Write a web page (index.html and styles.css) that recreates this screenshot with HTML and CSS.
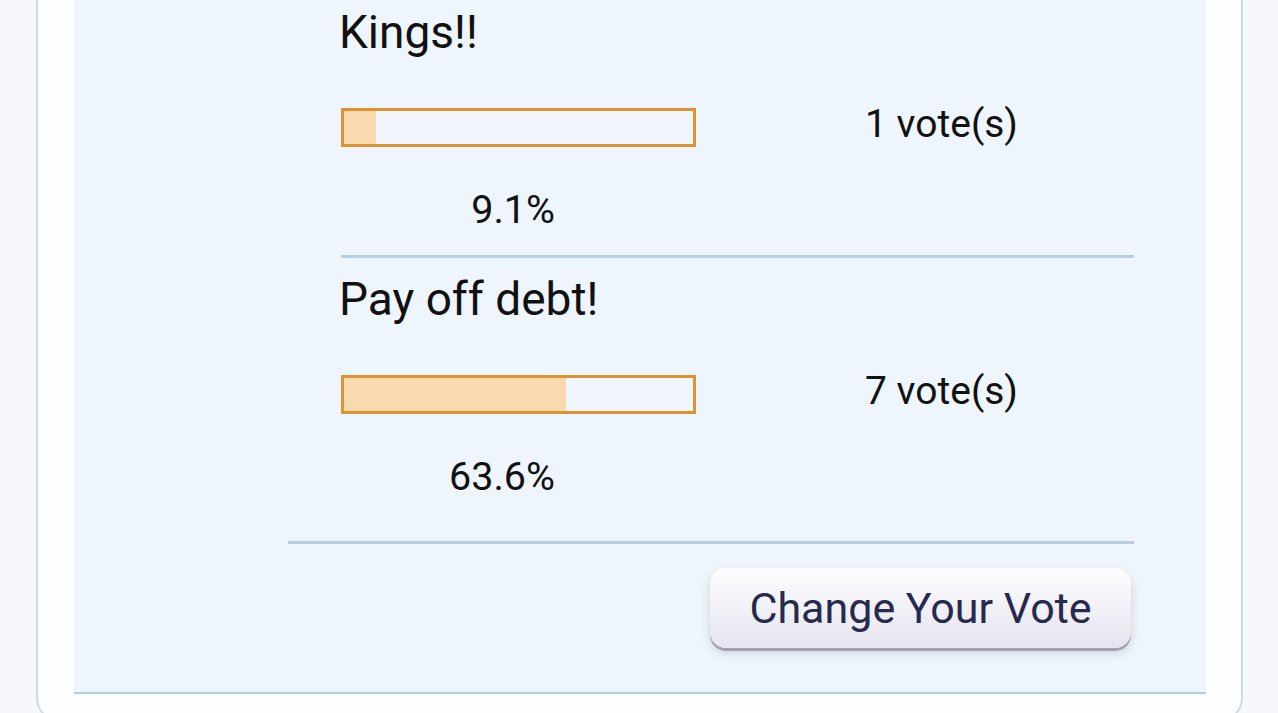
FILE: index.html
```html
<!DOCTYPE html>
<html lang="en">
<head>
<meta charset="UTF-8">
<meta name="viewport" content="width=device-width, initial-scale=1.0">
<title>Poll Results</title>
<link rel="stylesheet" href="styles.css">
</head>
<body>

<div class="card">
    <div class="panel">
        <div class="results">
            <div class="option">
                <div class="option-title">Kings!!</div>
                <div class="bar-line">
                    <div class="bar"><div class="bar-fill" style="width:9.1%"></div></div>
                    <span class="votes">1 vote(s)</span>
                </div>
                <div class="percent">9.1%</div>
            </div>
            <div class="option">
                <div class="option-title">Pay off debt!</div>
                <div class="bar-line">
                    <div class="bar"><div class="bar-fill" style="width:63.6%"></div></div>
                    <span class="votes">7 vote(s)</span>
                </div>
                <div class="percent">63.6%</div>
            </div>
        </div>
        <div class="footer">
            <button class="change-btn" type="button">Change Your Vote</button>
        </div>
    </div>
</div>

</body>
</html>
```

FILE: styles.css
```css
body {
    margin: 0;
    background-color: #f6f8fb;
    font-family: Roboto, "Liberation Sans", sans-serif;
    color: #111;
}
.card {
    margin: -9px 35px 0 36px;
    padding: 0 35px 26px 36px;
    background-color: #fcfdfe;
    border: 2px solid #cadcea;
    border-top: none;
    border-radius: 0 0 24px 24px;
}
.panel {
    background-color: #eef5fc;
    border-bottom: 2px solid #b6cfe2;
}
.results {
    margin-left: 267px;
    margin-right: 72px;
}
.option {
    padding: 14px 0 23px;
    border-bottom: 3px solid #b6cfe2;
}
.option:last-child {
    border-bottom: none;
}
.option-title {
    font-size: 46px;
    line-height: 54px;
    margin-left: -2px;
}
.bar-line {
    display: flex;
    align-items: center;
    height: 38px;
    margin-top: 49px;
}
.bar {
    box-sizing: border-box;
    width: 355px;
    height: 39px;
    border: 3px solid #de932f;
    background-color: #f0f6fc;
}
.bar-fill {
    height: 100%;
    background-color: #f9d9b0;
}
.votes {
    margin-left: 169px;
    margin-top: -6px;
    font-size: 39px;
    line-height: 38px;
}
.percent {
    width: 214px;
    margin-top: 42px;
    text-align: right;
    font-size: 39.5px;
    line-height: 44px;
}
.footer {
    display: flex;
    justify-content: flex-end;
    margin: 19px 72px 0 214px;
    padding: 24px 3px 44px 0;
    border-top: 3px solid #b6cfe2;
}
.change-btn {
    width: 421px;
    height: 80px;
    padding: 0;
    border: none;
    border-radius: 16px;
    background: linear-gradient(#fdfdff, #e5e4ef);
    box-shadow: 0 3px 0 #a2a1b2, 0 5px 10px rgba(60, 60, 90, 0.18);
    font-family: Roboto, "Liberation Sans", sans-serif;
    font-size: 43px;
    color: #262a4d;
    cursor: pointer;
}
```
